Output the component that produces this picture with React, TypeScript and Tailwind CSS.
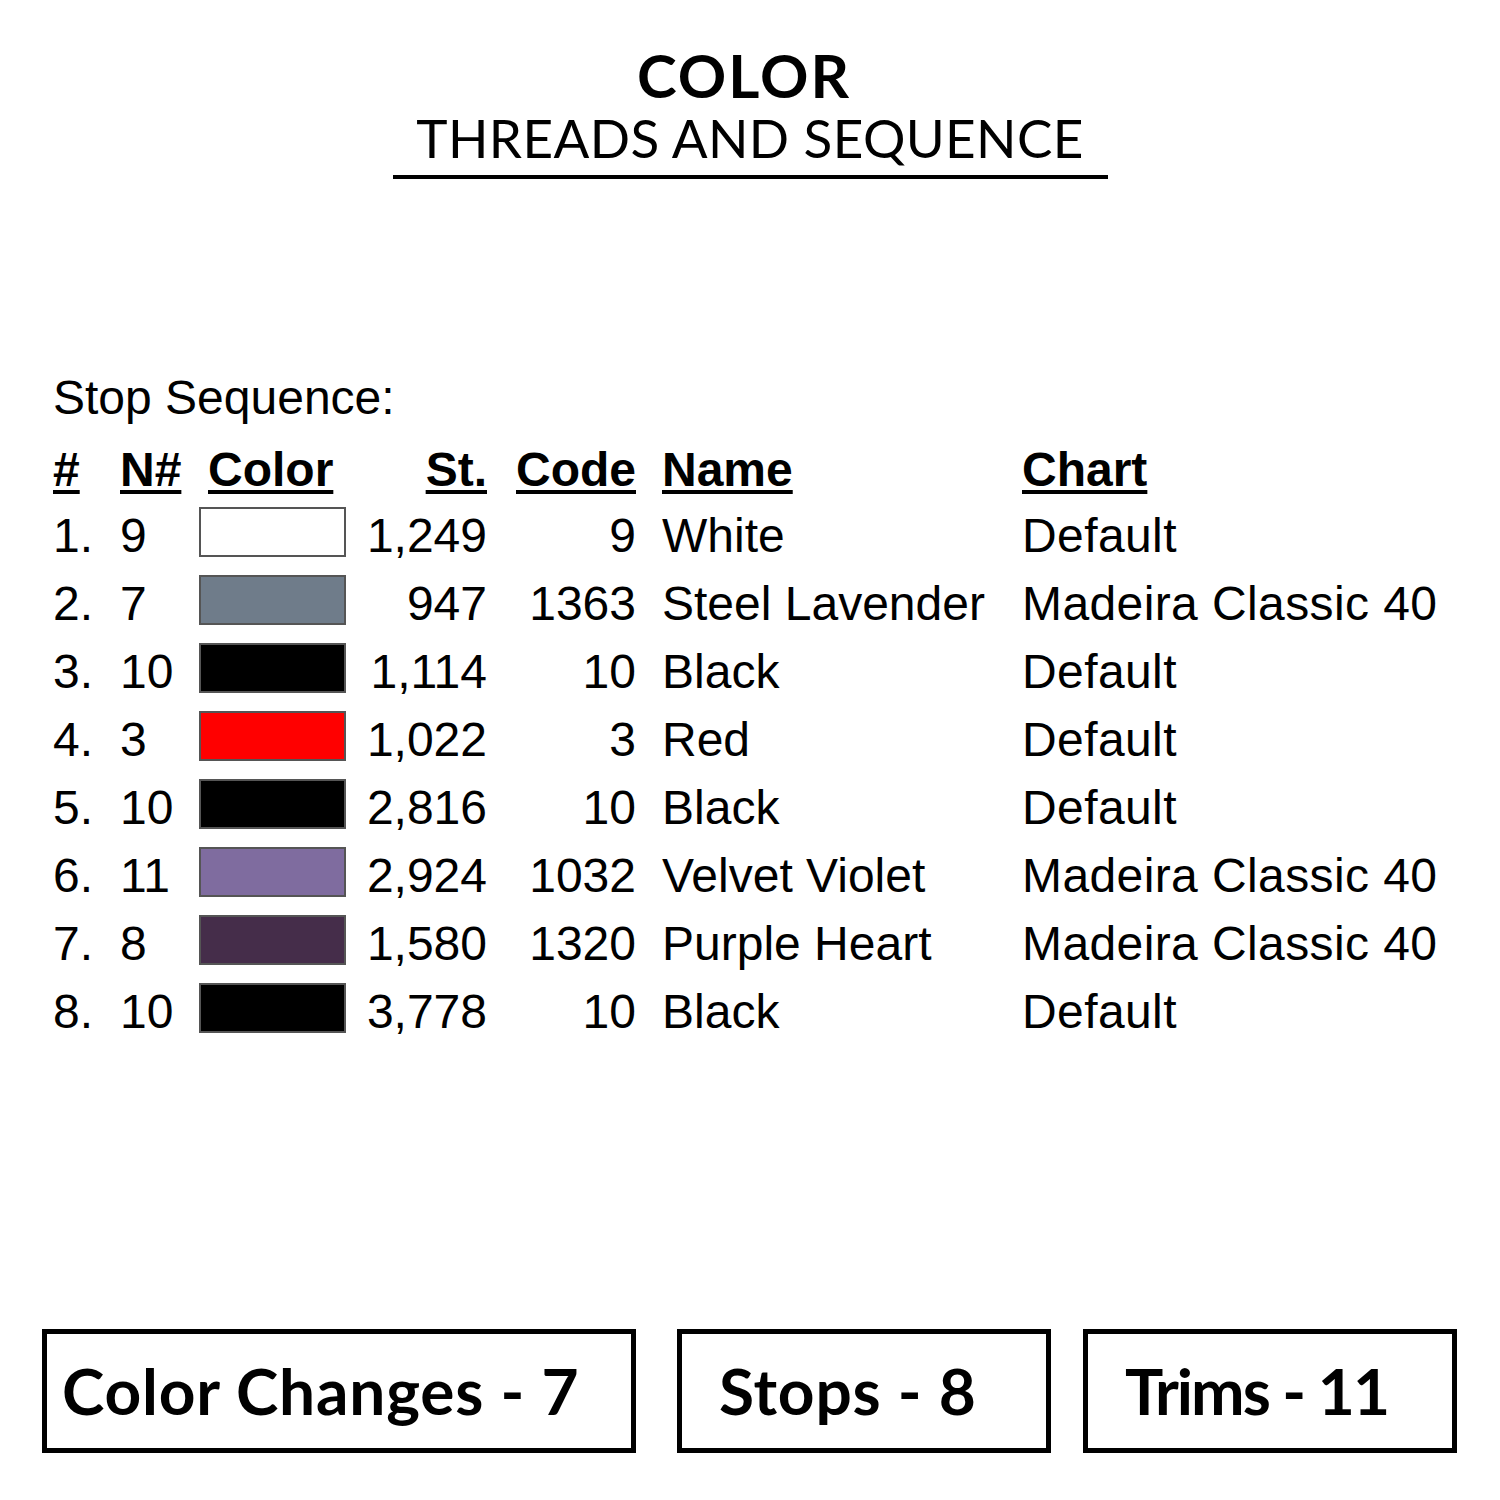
const rows = [
  { n: "1.", nn: "9", color: "bg-white", st: "1,249", code: "9", name: "White", chart: "Default" },
  { n: "2.", nn: "7", color: "bg-[#6f7c8a]", st: "947", code: "1363", name: "Steel Lavender", chart: "Madeira Classic 40" },
  { n: "3.", nn: "10", color: "bg-black", st: "1,114", code: "10", name: "Black", chart: "Default" },
  { n: "4.", nn: "3", color: "bg-[#ff0000]", st: "1,022", code: "3", name: "Red", chart: "Default" },
  { n: "5.", nn: "10", color: "bg-black", st: "2,816", code: "10", name: "Black", chart: "Default" },
  { n: "6.", nn: "11", color: "bg-[#7f6c9f]", st: "2,924", code: "1032", name: "Velvet Violet", chart: "Madeira Classic 40" },
  { n: "7.", nn: "8", color: "bg-[#452d4a]", st: "1,580", code: "1320", name: "Purple Heart", chart: "Madeira Classic 40" },
  { n: "8.", nn: "10", color: "bg-black", st: "3,778", code: "10", name: "Black", chart: "Default" },
];

const grid = "grid grid-cols-[67px_79px_147px_141px_149px_386px_auto]";

export default function App() {
  return (
    <div className="w-[1500px] h-[1500px] bg-white text-black flex flex-col">
      {/* title */}
      <div className="flex flex-col items-center pt-[45px] font-['Lato',sans-serif]">
        <div className="text-[60px] font-bold leading-none tracking-[2px] ml-[-12px]">COLOR</div>
        <div className="text-[53px] leading-none mt-[6px] tracking-[0.4px]">THREADS AND SEQUENCE</div>
        <div className="w-[715px] h-[4px] bg-black mt-[11px] ml-[1px]" />
      </div>

      {/* table */}
      <div className="pl-[53px] mt-[185px] font-['Liberation_Sans',Arial,sans-serif] text-[48px]">
        <div className="leading-[68px]">Stop Sequence:</div>
        <div className={`${grid} mt-[5px] leading-[65px] font-bold underline decoration-[4px] underline-offset-[4px]`}>
          <div>#</div>
          <div>N#</div>
          <div className="pl-[9px]">Color</div>
          <div className="text-right">St.</div>
          <div className="pl-[29px]">Code</div>
          <div className="pl-[26px]">Name</div>
          <div>Chart</div>
        </div>
        {rows.map((r, i) => (
          <div key={i} className={`${grid} leading-[68px]`}>
            <div>{r.n}</div>
            <div>{r.nn}</div>
            <div>
              <div className={`h-[50px] mt-[5px] border-2 border-[#555] ${r.color}`} />
            </div>
            <div className="text-right">{r.st}</div>
            <div className="text-right">{r.code}</div>
            <div className="pl-[26px] whitespace-nowrap">{r.name}</div>
            <div className="whitespace-nowrap tracking-[0.4px]">{r.chart}</div>
          </div>
        ))}
      </div>

      {/* totals */}
      <div className="mt-auto mb-[47px] flex pl-[42px] font-['Lato',sans-serif] font-bold text-[64px] leading-none">
        <div className="w-[594px] h-[124px] border-[5px] border-black flex items-center pl-[15px] tracking-[0.8px]">Color Changes - 7</div>
        <div className="w-[374px] h-[124px] border-[5px] border-black flex items-center pl-[37px] ml-[41px] tracking-[0.8px]">Stops - 8</div>
        <div className="w-[374px] h-[124px] border-[5px] border-black flex items-center pl-[37px] ml-[32px] tracking-[-2px]">Trims - 11</div>
      </div>
    </div>
  );
}
